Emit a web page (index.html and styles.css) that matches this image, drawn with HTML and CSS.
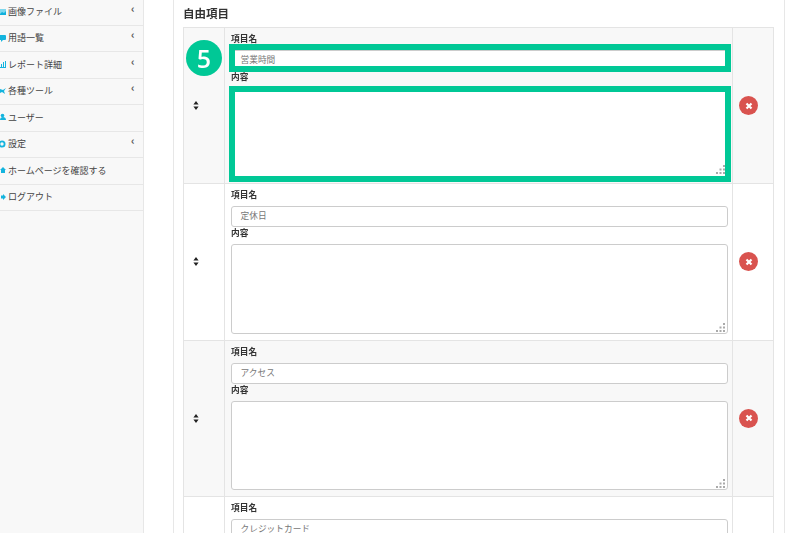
FILE: index.html
```html
<!DOCTYPE html>
<html lang="ja">
<head>
<meta charset="utf-8">
<title>自由項目</title>
<link rel="stylesheet" href="styles.css">
</head>
<body>
<div class="page">
  <nav class="sidebar">
    <div class="nav-item first"><svg class="nav-icon" viewBox="0 0 6 8"><path d="M0 1h6v6H0z" fill="#7fd8ee"/><path d="M0 6l2-2 2 1 2-2v4H0z" fill="#0fb0dc"/></svg><span class="nav-label">画像ファイル</span><span class="chev">‹</span></div>
    <div class="nav-item"><svg class="nav-icon" viewBox="0 0 6 8"><path d="M0 1h5a1 1 0 0 1 1 1v3a1 1 0 0 1-1 1H3L1 8V6H0z" fill="#14b4de"/></svg><span class="nav-label">用語一覧</span><span class="chev">‹</span></div>
    <div class="nav-item"><svg class="nav-icon" viewBox="0 0 6 8"><path d="M0 7h6v1H0zM1 4h1v3H1zM3 2h1v5H3zM5 1h1v6H5z" fill="#14b4de"/></svg><span class="nav-label">レポート詳細</span><span class="chev">‹</span></div>
    <div class="nav-item"><svg class="nav-icon" viewBox="0 0 6 8"><path d="M0 2l3 1 3-2-2 3 1 3-3-2-2 1z" fill="#14b4de"/></svg><span class="nav-label">各種ツール</span><span class="chev">‹</span></div>
    <div class="nav-item"><svg class="nav-icon" viewBox="0 0 6 8"><circle cx="2.500" cy="2.500" r="1.800" fill="#14b4de"/><path d="M0 7c0-4 6-4 6 0z" fill="#14b4de"/></svg><span class="nav-label">ユーザー</span></div>
    <div class="nav-item"><svg class="nav-icon" viewBox="0 0 6 8"><circle cx="2" cy="4" r="2.600" fill="none" stroke="#14b4de" stroke-width="1.800"/></svg><span class="nav-label">設定</span><span class="chev">‹</span></div>
    <div class="nav-item"><svg class="nav-icon" viewBox="0 0 6 8"><path d="M0 4l3-3 3 3H5v3H1V4z" fill="#14b4de"/></svg><span class="nav-label">ホームページを確認する</span></div>
    <div class="nav-item"><svg class="nav-icon" viewBox="0 0 6 8"><path d="M1 2.500h2V1l3 3-3 3V5.500H1z" fill="#14b4de"/></svg><span class="nav-label">ログアウト</span></div>
  </nav>
  <main class="panel">
    <h2 class="title">自由項目</h2>
    <table class="items">
      <tr class="odd">
        <td class="handle"><svg class="sort" viewBox="0 0 6 9"><path d="M3 0l2.600 3.500H.4zM3 9L.4 5.500h5.200z"/></svg></td>
        <td class="fields">
          <div class="label">項目名</div>
          <div class="value"><div class="input">営業時間</div><div class="mark mark-input"></div></div>
          <div class="label">内容</div>
          <div class="value"><div class="area"><div class="mark mark-area"></div><svg class="grip grip-up" viewBox="0 0 9 9"><path d="M7 0h2v2H7zM7 3.500h2v2H7zM3.500 3.500h2v2h-2zM7 7h2v2H7zM3.500 7h2v2h-2zM0 7h2v2H0z"/></svg></div></div>
        </td>
        <td class="action"><span class="del"><svg viewBox="0 0 8 8"><path d="M1.500 1.500l5 5M6.500 1.500l-5 5"/></svg></span></td>
      </tr>
      <tr>
        <td class="handle"><svg class="sort" viewBox="0 0 6 9"><path d="M3 0l2.600 3.500H.4zM3 9L.4 5.500h5.200z"/></svg></td>
        <td class="fields">
          <div class="label">項目名</div>
          <div class="value"><div class="input">定休日</div></div>
          <div class="label">内容</div>
          <div class="value"><div class="area"><svg class="grip" viewBox="0 0 9 9"><path d="M7 0h2v2H7zM7 3.500h2v2H7zM3.500 3.500h2v2h-2zM7 7h2v2H7zM3.500 7h2v2h-2zM0 7h2v2H0z"/></svg></div></div>
        </td>
        <td class="action"><span class="del"><svg viewBox="0 0 8 8"><path d="M1.500 1.500l5 5M6.500 1.500l-5 5"/></svg></span></td>
      </tr>
      <tr class="odd">
        <td class="handle"><svg class="sort" viewBox="0 0 6 9"><path d="M3 0l2.600 3.500H.4zM3 9L.4 5.500h5.200z"/></svg></td>
        <td class="fields">
          <div class="label">項目名</div>
          <div class="value"><div class="input">アクセス</div></div>
          <div class="label">内容</div>
          <div class="value"><div class="area"><svg class="grip" viewBox="0 0 9 9"><path d="M7 0h2v2H7zM7 3.500h2v2H7zM3.500 3.500h2v2h-2zM7 7h2v2H7zM3.500 7h2v2h-2zM0 7h2v2H0z"/></svg></div></div>
        </td>
        <td class="action"><span class="del"><svg viewBox="0 0 8 8"><path d="M1.500 1.500l5 5M6.500 1.500l-5 5"/></svg></span></td>
      </tr>
      <tr>
        <td class="handle"></td>
        <td class="fields">
          <div class="label">項目名</div>
          <div class="value"><div class="input">クレジットカード</div></div>
        </td>
        <td class="action"></td>
      </tr>
    </table>
    <div class="badge">5</div>
  </main>
</div>
</body>
</html>
```
FILE: styles.css
```css
* { box-sizing: border-box; }
html, body { margin: 0; height: 533px; overflow: hidden; background: #fff; }
body { font-family: "Noto Sans CJK JP", "Liberation Sans", sans-serif; color: #333; }
.page { display: flex; height: 533px; filter: blur(0.35px); }
.sidebar { width: 144px; flex: none; background: #f8f8f8; border-right: 1px solid #e7e7e7; }
.nav-item { display: flex; align-items: center; height: 26.500px; border-bottom: 1px solid #e7e7e7; padding-bottom: 1px; font-size: 9px; color: #444; }
.nav-item.first { height: 25.500px; }
.nav-icon { width: 6px; height: 8px; flex: none; margin-right: 2px; }
.nav-label { flex: 1; white-space: nowrap; }
.chev { width: 12px; flex: none; font-size: 11px; line-height: 8px; height: 15px; color: #555; font-weight: 700; }
.panel { position: relative; width: 612px; margin-left: 29px; flex: none; height: 533px; border-left: 1px solid #e7e7e7; border-right: 1px solid #e7e7e7; padding: 0 9px; overflow: hidden; }
.title { margin: 0; height: 27px; padding-top: 5px; font-size: 11.500px; line-height: 16px; font-weight: 700; color: #333; }
.items { border-collapse: collapse; width: 591px; table-layout: fixed; }
.items td { border: 1px solid #e4e4e4; padding: 0; }
.items tr.odd td { background: #f8f8f8; }
.handle { width: 41px; vertical-align: middle; }
.sort { display: block; width: 6px; height: 9px; margin: 0 0 0 8.500px; fill: #222; }
.fields { padding: 5px 4px 5.500px 6px !important; }
.action { width: 41px; vertical-align: middle; padding-left: 6px !important; }
.label { height: 12px; margin-bottom: 5px; font-size: 8.700px; line-height: 12px; font-weight: 700; color: #333; }
.value { position: relative; }
.input { height: 21px; background: #fff; border: 1px solid #ccc; border-radius: 3px; padding-left: 8.500px; font-size: 8.700px; line-height: 18px; color: #777; white-space: nowrap; }
.area { position: relative; height: 89.800px; background: #fff; border: 1px solid #ccc; border-radius: 3px; }
.grip { position: absolute; right: 2px; bottom: 1px; width: 9px; height: 9px; fill: #aaa; }
.grip-up { bottom: 2.500px; }
.mark { position: absolute; border: 6px solid #00c896; }
.mark-input { left: -2px; right: -3px; top: -6px; height: 28px; }
.mark-area { left: -3px; right: -4px; top: -3px; height: 96px; }
.del { display: flex; align-items: center; justify-content: center; width: 19px; height: 19px; border-radius: 50%; background: #d9534f; }
.del svg { width: 8px; height: 8px; fill: none; stroke: #fff; stroke-width: 2.200px; }
.badge { position: absolute; left: 12px; top: 40px; width: 36px; height: 36px; border-radius: 50%; background: #00c896; color: #fff; font-family: "Open Sans", sans-serif; font-size: 25px; font-weight: 600; line-height: 36px; text-align: center; }
```
